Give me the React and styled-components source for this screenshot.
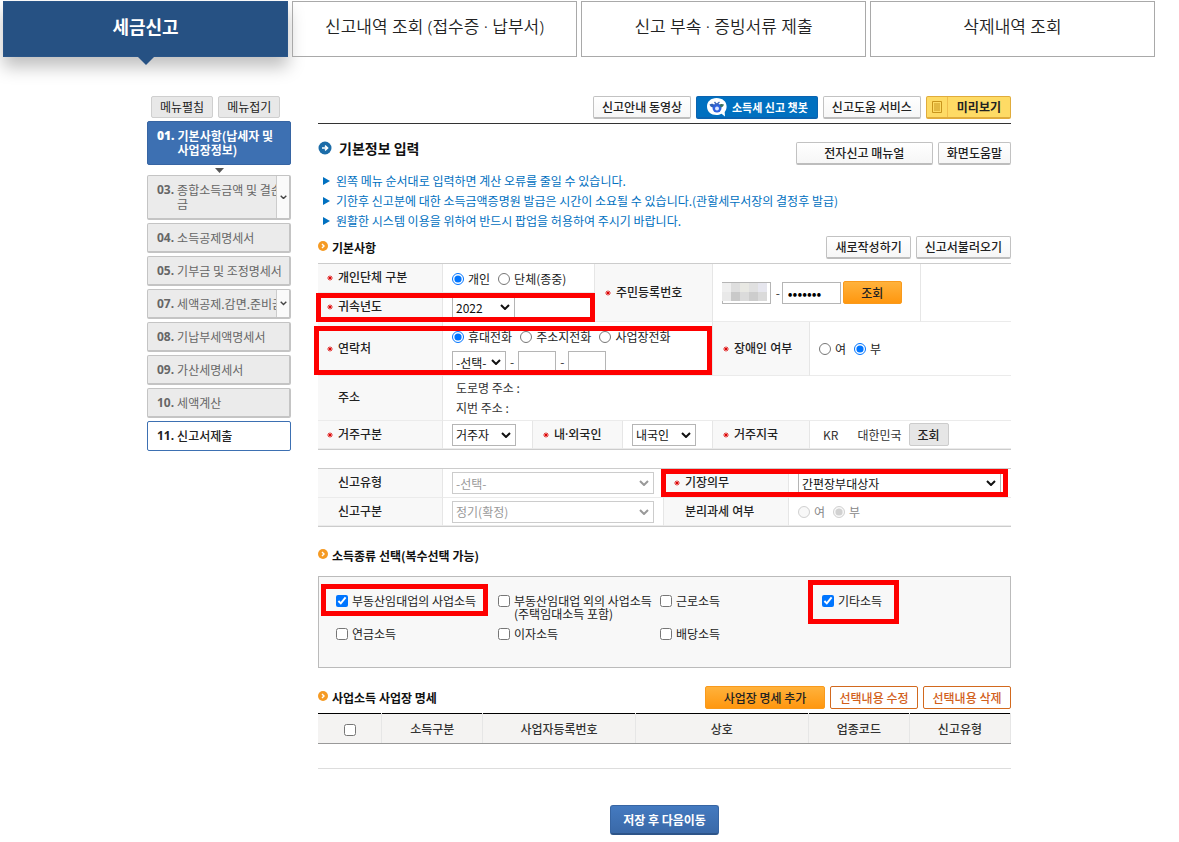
import React, { useState } from "react";

import styled, { createGlobalStyle, css } from "styled-components"

const GlobalStyle = createGlobalStyle`
    * {
        box-sizing: border-box;
    }
    body {
        margin: 0;
        background: #fff;
        color: #333;
        font-family: "Noto Sans CJK KR", "Noto Sans", sans-serif;
        font-size: 12px;
        line-height: 16px;
    }
    button, input, select {
        font-family: inherit;
        font-size: 12px;
    }
    ul, ol, h2, h3 {
        margin: 0;
        padding: 0;
        list-style: none;
    }
    `

const Page = styled.div`
    padding: 1px 24px 8px 3px;
    `

const TabBar = styled.nav`
    display: grid;
    grid-template-columns: repeat(4, 1fr);
    gap: 4px;
    `

const Tab = styled.a`
    position: relative;
    display: flex;
    align-items: center;
    justify-content: center;
    height: 56px;
    padding-bottom: 4px;
    border: 1px solid #a9a9a9;
    color: #222;
    font-family: "Noto Sans", "Noto Sans CJK KR", sans-serif;
    font-size: 17px;
    font-weight: 350;
    text-decoration: none;

    ${(props) => props.$active && css`
        border-color: #2a5588;
        background: #265183;
        color: #fff;
        font-size: 18px;
        font-weight: 700;
        box-shadow: 0 10px 16px rgba(0, 0, 0, 0.25);

        &::after {
            content: "";
            position: absolute;
            top: 100%;
            left: 50%;
            margin-left: -9px;
            border: 9px solid transparent;
            border-top-color: #265183;
            border-bottom: 0;
        }
    `}
    `

const Body = styled.div`
    display: flex;
    align-items: flex-start;
    gap: 27px;
    padding: 39px 144px 0 144px;
    `

const Side = styled.aside`
    flex: none;
    width: 144px;
    `

const SideTools = styled.div`
    display: flex;
    gap: 5px;
    padding: 0 4px 3px;
    `

const SmallButton = styled.button`
    height: 22px;
    padding: 0 8px;
    border: 1px solid #cfcfcf;
    border-radius: 2px;
    background: #e8e8e8;
    color: #222;
    line-height: 18px;
    white-space: nowrap;
    `

const Steps = styled.ol`
    display: flex;
    flex-direction: column;
    gap: 3px;
    `

const Step = styled.li`
    position: relative;
    display: flex;
    min-height: ${(props) => props.$tall ? "45px" : "30px"};
    border: 1px solid #c4c4c4;
    border-right-width: 2px;
    border-bottom-width: 2px;
    border-radius: 2px;
    background: #ebebeb;
    color: #666;
    overflow: hidden;

    ${(props) => props.$state === "on" && css`
        min-height: 44px;
        border: 1px solid #3765a3;
        background: #3d70b2;
        color: #fff;
        font-weight: 700;
    `}
    ${(props) => props.$state === "open" && css`
        border: 1px solid #3d70b2;
        background: #fff;
        color: #222;
        font-weight: 500;
    `}
    `

const StepLink = styled.a`
    flex: 1;
    display: flex;
    gap: 3px;
    min-width: 0;
    padding: 7px 0 5px 9px;
    color: inherit;
    line-height: 14px;
    text-decoration: none;
    white-space: pre;
    overflow: hidden;

    b {
        font-family: "Noto Sans", sans-serif;
    }
    `

const StepToggle = styled.button`
    flex: none;
    display: flex;
    align-items: center;
    justify-content: center;
    width: 13px;
    padding: 0;
    border: 0;
    border-left: 1px solid #ccc;
    background: #fafafa;
    `

const StepArrow = styled.li`
    display: flex;
    justify-content: center;
    height: 4px;
    `

const Main = styled.main`
    flex: 1;
    min-width: 0;
    `

const TopTools = styled.div`
    display: flex;
    justify-content: flex-end;
    gap: 5px;
    padding-bottom: 4px;
    border-bottom: 1px solid #333;
    `

const Button = styled.button`
    display: flex;
    align-items: center;
    justify-content: center;
    height: 23px;
    min-width: ${(props) => props.$wide ? "137px" : "0"};
    padding: 0 8px;
    border: 1px solid #c2c2c2;
    border-bottom: 2px solid #bdbdbd;
    border-radius: 2px;
    background: linear-gradient(#fff, #f6f6f6);
    color: #222;
    font-weight: 500;
    line-height: 18px;
    white-space: nowrap;
    `

const ChatButton = styled(Button)`
    gap: 4px;
    padding: 0 9px;
    border-color: #0b63b0;
    background: #0070c0;
    color: #fff;
    font-size: 11px;
    font-weight: 700;
    `

const PreviewButton = styled(Button)`
    padding: 0 9px 0 0;
    border-color: #e0ac3c;
    background: #fedb65;
    color: #222;
    font-weight: 700;

    span {
        display: flex;
        align-items: center;
        justify-content: center;
        width: 21px;
        height: 100%;
        margin-right: 9px;
        border-right: 1px solid #f0bd4b;
    }
    `

const OrangeButton = styled(Button)`
    min-width: ${(props) => props.$wide ? "120px" : "59px"};
    border: 1px solid #f99a1c;
    background: linear-gradient(#ffb23c, #ff970f);
    `

const OutlineButton = styled(Button)`
    min-width: 88px;
    border: 1px solid #d2691e;
    background: #fff;
    color: #d2601a;
    `

const GrayButton = styled(Button)`
    border: 1px solid #ccc;
    background: #e6e6e6;
    `

const TitleRow = styled.div`
    display: flex;
    align-items: flex-start;
    justify-content: space-between;
    padding-top: 18px;
    `

const PageTitle = styled.h2`
    display: flex;
    align-items: center;
    gap: 7px;
    height: 12px;
    color: #111;
    font-size: 14px;
    font-weight: 700;
    `

const Group = styled.div`
    display: flex;
    gap: 5px;
    `

const Notices = styled.ul`
    padding: 6px 0 0 5px;
    color: #0070c0;
    line-height: 20px;

    li {
        display: flex;
        align-items: center;
        gap: 6px;
    }
    `

const SectionHead = styled.div`
    display: flex;
    align-items: flex-end;
    justify-content: space-between;
    min-height: ${(props) => props.$height};
    padding-bottom: ${(props) => props.$bottom || "4px"};
    `

const SectionTitle = styled.h3`
    display: flex;
    align-items: center;
    gap: 4px;
    padding-bottom: 2px;
    color: #111;
    font-size: 12px;
    font-weight: 700;
    line-height: 18px;

    svg {
        margin-bottom: 4px;
    }
    `

const FormGrid = styled.div`
    display: grid;
    grid-template-columns: ${(props) => props.$columns};
    grid-template-rows: ${(props) => props.$rows};
    margin-bottom: 18px;
    border-top: 1px solid #ccc;
    border-bottom: 1px solid #ccc;
    `

const Cell = styled.div`
    position: relative;
    grid-column: span ${(props) => props.$span || 1};
    grid-row: span ${(props) => props.$rowSpan || 1};
    display: flex;
    align-items: center;
    min-width: 0;
    border-bottom: 1px solid #ebebeb;
    border-left: 1px solid #e6e6e6;
    `

const LabelCell = styled(Cell)`
    padding-left: ${(props) => props.$required ? "10px" : "21px"};
    background: #f8f8f8;
    color: #222;
    font-family: "Noto Sans", "Noto Sans CJK KR", sans-serif;
    font-weight: 500;

    ${(props) => props.$first && css`
        padding-left: ${props.$required ? "9px" : "20px"};
        border-left: 0;
    `}
    `

const ValueCell = styled(Cell)`
    gap: 2px;
    padding-left: 9px;
    `

const Stack = styled.div`
    display: flex;
    flex-direction: column;
    gap: 4px;
    padding-left: 4px;
    `

const PhoneFields = styled.div`
    display: flex;
    flex-direction: column;
    gap: 8px;
    padding-top: 6px;
    `

const Line = styled.div`
    display: flex;
    align-items: center;
    gap: ${(props) => props.$gap || 4}px;
    `

const Star = styled.svg`
    flex: none;
    width: 6px;
    height: 6px;
    margin-right: 5px;
    `

const Choice = styled.label`
    display: flex;
    align-items: flex-start;
    gap: 4px;
    color: ${(props) => props.$muted ? "#888" : "#222"};
    line-height: 13px;
    white-space: nowrap;

    input {
        flex: none;
        width: 12px;
        height: 12px;
        margin: 1px 0 0;
    }
    `

const Select = styled.select`
    appearance: none;
    width: ${(props) => props.$width};
    height: 22px;
    padding: 0 18px 0 3px;
    border: 1px solid #b5b5b5;
    border-radius: 0;
    background: #fff;
    color: #111;
    opacity: 1;

    &:disabled {
        border-color: #ccc;
        color: #999;
    }
    `

const SelectBox = styled.span`
    position: relative;
    display: flex;
    flex: none;

    svg {
        position: absolute;
        top: 8px;
        right: 5px;
        pointer-events: none;
    }
    `

const TextInput = styled.input`
    width: ${(props) => props.$width};
    height: 22px;
    padding: 0 5px;
    border: 1px solid #b5b5b5;
    background: #fff;

    &[type="password"] {
        font-size: 14px;
    }
    `

const Masked = styled.span`
    position: relative;
    display: flex;

    svg {
        position: absolute;
        top: 1px;
        left: 0;
    }
    `

const Mark = styled.span`
    position: absolute;
    z-index: 2;
    inset: ${(props) => props.$inset};
    border: 5px solid #fe0000;
    pointer-events: none;
    `

const Marked = styled.div`
    position: relative;
    `

const IncomeBox = styled.div`
    display: grid;
    grid-template-columns: repeat(3, 162px) 1fr;
    grid-auto-rows: 26px;
    row-gap: 7px;
    min-height: 92px;
    padding: 17px 0 0 17px;
    border: 1px solid #bbb;
    background: #f8f8f8;
    `

const BizTable = styled.table`
    width: 100%;
    border-collapse: collapse;
    border-top: 1px solid #000;
    table-layout: fixed;

    th {
        height: 30px;
        padding: 0;
        border-right: 1px solid #e6e6e6;
        border-bottom: 1px solid #999;
        background: #f4f3f2;
        color: #333;
        font-weight: 500;
    }
    th input {
        width: 12px;
        height: 12px;
        margin: 0;
        vertical-align: middle;
    }
    td {
        height: 25px;
        padding: 0;
        border-bottom: 1px solid #ddd;
    }
    `

const SaveRow = styled.div`
    display: flex;
    justify-content: center;
    padding-top: 36px;
    `

const SaveButton = styled.button`
    height: 30px;
    padding: 0 12px;
    border: 1px solid #3765a3;
    border-bottom: 2px solid #2d5488;
    border-radius: 3px;
    background: linear-gradient(#447ac0, #3a69a8);
    color: #fff;
    font-weight: 700;
    `

const Chevron = ({ color = "#111", size = 10 }) => (
    <svg width={size} height={size * 0.6} viewBox="0 0 10 6" fill="none">
        <path d="M1 1l4 4 4-4" stroke={color} strokeWidth="2" />
    </svg>
)

const RequiredStar = () => (
    <Star viewBox="0 0 6 6">
        <path d="M3 .5v5M.3 3h5.400M1.300 1.300l3.400 3.400M4.700 1.300L1.300 4.700" stroke="#d00" strokeWidth="1" />
    </Star>
)

const SectionIcon = () => (
    <svg width="10" height="10" viewBox="0 0 10 10">
        <circle cx="5" cy="5" r="5" fill="#f59a23" />
        <path d="M4 3l2 2-2 2" fill="none" stroke="#fff" strokeWidth="1.4" />
    </svg>
)

const TitleIcon = () => (
    <svg width="14" height="14" viewBox="0 0 14 14">
        <circle cx="7" cy="7" r="6.5" fill="#1b6ca8" />
        <path d="M4 7h5M7 4.6L9.6 7 7 9.4" fill="none" stroke="#fff" strokeWidth="1.5" />
    </svg>
)

const BotIcon = () => (
    <svg width="22" height="20" viewBox="0 0 22 20">
        <path d="M10.500 1C5 1 1 4.500 1 9.500s4 8.500 9.500 8.500c1.800 0 3.500-.3 5-1.200L19 19.500l-.3-4.500C20 13.500 20.600 11.700 20.600 9.500 20.600 4.500 16.500 1 10.500 1z" fill="#fff" />
        <circle cx="11" cy="11" r="4.500" fill="#2f62e0" />
        <circle cx="11" cy="11.500" r="2" fill="#dbe7ff" />
        <path d="M3.500 7.500c2-1.500 4-.8 5 .5l-2 2.500c-1.500-.5-2.500-1.500-3-3z" fill="#2f5fb5" />
        <path d="M18 7.500c-2-1-4-.5-4.500.5l1.500 2.500c1.500-.5 2.500-1.500 3-3z" fill="#37705f" />
        <path d="M8.500 5l2 2.500L13.500 5" fill="none" stroke="#3f68b8" strokeWidth="1.300" />
    </svg>
)

const DocIcon = () => (
    <svg width="10" height="12" viewBox="0 0 10 12" fill="none" stroke="#c8951d">
        <path d="M.5.5h9v11h-9z" />
        <path d="M2 3h6M2 5h6M2 7h6M2 9h6" />
    </svg>
)

const Bullet = () => (
    <svg width="7" height="8" viewBox="0 0 7 8">
        <path d="M0 0l7 4-7 4z" fill="#0070c0" />
    </svg>
)

const mosaic = [
    ["#efefef", "#dedede", "#e8e8e3", "#e0e0e0", "#e6e6ee"],
    ["#e9e9e9", "#c9c9c9", "#dbdbdb", "#cdcdcd", "#dadada"],
]

const Mosaic = () => (
    <svg width="45" height="18" viewBox="0 0 45 18">
        {mosaic.map((row, y) => row.map((color, x) => (
            <rect key={`${x}-${y}`} x={x * 9} y={y * 9} width="9" height="9" fill={color} />
        )))}
    </svg>
)

const Dropdown = ({ label, options, width, disabled }) => (
    <SelectBox>
        <Select aria-label={label} $width={width} disabled={disabled}>
            {options.map((item) => <option key={item}>{item}</option>)}
        </Select>
        <Chevron color={disabled ? "#999" : "#111"} />
    </SelectBox>
)

const Radios = ({ name, options, value, disabled }) => {
    const [picked, setPicked] = useState(value)

    return (
        <Line $gap={8}>
            {options.map((item) => (
                <Choice key={item} $muted={disabled}>
                    <input type="radio" name={name} disabled={disabled}
                    checked={picked === item}
                    onChange={() => setPicked(item)}/>
                    {item}
                </Choice>
            ))}
        </Line>
    )
}

const Label = ({ children, required, ...rest }) => (
    <LabelCell $required={required} {...rest}>
        {required && <RequiredStar />}
        {children}
    </LabelCell>
)

const tabs = ["세금신고", "신고내역 조회 (접수증 · 납부서)", "신고 부속 · 증빙서류 제출", "삭제내역 조회"]

const steps = [
    { no: "01.", name: "기본사항(납세자 및\n사업장정보)", state: "on" },
    { no: "03.", name: "종합소득금액 및 결손\n금", toggle: true, tall: true },
    { no: "04.", name: "소득공제명세서" },
    { no: "05.", name: "기부금 및 조정명세서" },
    { no: "07.", name: "세액공제.감면.준비금", toggle: true },
    { no: "08.", name: "기납부세액명세서" },
    { no: "09.", name: "가산세명세서" },
    { no: "10.", name: "세액계산" },
    { no: "11.", name: "신고서제출", state: "open" },
]

const notices = [
    "왼쪽 메뉴 순서대로 입력하면 계산 오류를 줄일 수 있습니다.",
    "기한후 신고분에 대한 소득금액증명원 발급은 시간이 소요될 수 있습니다.(관할세무서장의 결정후 발급)",
    "원활한 시스템 이용을 위하여 반드시 팝업을 허용하여 주시기 바랍니다.",
]

const incomes = [
    { name: "부동산임대업의 사업소득", checked: true, mark: "-10px 10px 4px -15px" },
    { name: "부동산임대업 외의 사업소득", note: "(주택임대소득 포함)" },
    { name: "근로소득" },
    { name: "기타소득", checked: true, mark: "-14px 111px -4px -14px" },
    { name: "연금소득" },
    { name: "이자소득" },
    { name: "배당소득" },
]

const columns = [
    { name: "소득구분", width: "14.6%" },
    { name: "사업자등록번호", width: "22%" },
    { name: "상호", width: "25%" },
    { name: "업종코드", width: "14.6%" },
    { name: "신고유형", width: "14.6%" },
]

const Sidebar = () => (
    <Side>
        <SideTools>
            <SmallButton type="button">메뉴펼침</SmallButton>
            <SmallButton type="button">메뉴접기</SmallButton>
        </SideTools>
        <Steps>
            {steps.map((item) => (
                <React.Fragment key={item.no}>
                    <Step $state={item.state} $tall={item.tall}>
                        <StepLink href="#">
                            <b>{item.no}</b>
                            <span>{item.name}</span>
                        </StepLink>
                        {item.toggle && (
                            <StepToggle type="button" aria-label={item.name}>
                                <Chevron color="#444" size={7} />
                            </StepToggle>
                        )}
                    </Step>
                    {item.state === "on" && (
                        <StepArrow>
                            <svg width="9" height="5" viewBox="0 0 9 5"><path d="M0 0h9L4.500 5z" fill="#555" /></svg>
                        </StepArrow>
                    )}
                </React.Fragment>
            ))}
        </Steps>
    </Side>
)

const BasicForm = () => (
    <FormGrid $columns="124px 90px 62px 28px 90px 97px 111px 1fr" $rows="29px 29px 54px 45px 28px">
        <Label $first required>개인단체 구분</Label>
        <ValueCell $span={2}>
            <Radios name="kind" options={["개인", "단체(종중)"]} value="개인" />
        </ValueCell>
        <Label $span={2} $rowSpan={2} required>주민등록번호</Label>
        <ValueCell $span={2} $rowSpan={2}>
            <Masked>
                <TextInput aria-label="주민등록번호 앞자리" $width="49px" />
                <Mosaic />
            </Masked>
            <Line $gap={2}>
                <span>&nbsp;-</span>
                <TextInput type="password" aria-label="주민등록번호 뒷자리" $width="59px" defaultValue="1234567" />
            </Line>
            <OrangeButton type="button">조회</OrangeButton>
        </ValueCell>
        <Cell $rowSpan={2} />

        <Label $first required>
            귀속년도
            <Mark $inset="0 -153px -1px -2px" />
        </Label>
        <ValueCell $span={2}>
            <Dropdown label="귀속년도" options={["2022", "2021"]} width="63px" />
        </ValueCell>

        <Label $first required>
            연락처
            <Mark $inset="4px -270px 0 -4px" />
        </Label>
        <ValueCell $span={4}>
            <PhoneFields>
                <Radios name="phone" options={["휴대전화", "주소지전화", "사업장전화"]} value="휴대전화" />
                <Line>
                    <Dropdown label="전화 앞자리" options={["-선택-", "010"]} width="54px" />
                    <span>-</span>
                    <TextInput aria-label="전화 가운데자리" $width="38px" />
                    <span>-</span>
                    <TextInput aria-label="전화 뒷자리" $width="38px" />
                </Line>
            </PhoneFields>
        </ValueCell>
        <Label required>장애인 여부</Label>
        <ValueCell $span={2}>
            <Radios name="disabled" options={["여", "부"]} value="부" />
        </ValueCell>

        <Label $first>주소</Label>
        <ValueCell $span={7}>
            <Stack>
                <span>도로명 주소 :</span>
                <span>지번 주소 :</span>
            </Stack>
        </ValueCell>

        <Label $first required>거주구분</Label>
        <ValueCell>
            <Dropdown label="거주구분" options={["거주자", "비거주자"]} width="64px" />
        </ValueCell>
        <Label $span={2} required>내·외국인</Label>
        <ValueCell>
            <Dropdown label="내·외국인" options={["내국인", "외국인"]} width="64px" />
        </ValueCell>
        <Label required>거주지국</Label>
        <ValueCell $span={2}>
            <Stack>
                <Line $gap={7}>
                    <span>KR</span>
                    <span>&emsp;대한민국</span>
                    <GrayButton type="button">조회</GrayButton>
                </Line>
            </Stack>
        </ValueCell>
    </FormGrid>
)

const ReportForm = () => (
    <FormGrid $columns="124px 221px 125px 1fr" $rows="29px 28px">
        <Label $first>신고유형</Label>
        <ValueCell>
            <Dropdown label="신고유형" options={["-선택-"]} width="202px" disabled />
        </ValueCell>
        <Label required>기장의무</Label>
        <ValueCell>
            <Dropdown label="기장의무" options={["간편장부대상자", "복식부기의무자"]} width="203px" />
            <Mark $inset="0 3px 0 -128px" />
        </ValueCell>
        <Label $first>신고구분</Label>
        <ValueCell>
            <Dropdown label="신고구분" options={["정기(확정)"]} width="202px" disabled />
        </ValueCell>
        <Label>분리과세 여부</Label>
        <ValueCell>
            <Radios name="separate" options={["여", "부"]} value="부" disabled />
        </ValueCell>
    </FormGrid>
)

const Business = () => (
    <BizTable>
        <colgroup>
            <col />
            {columns.map((item) => <col key={item.name} style={{ width: item.width }} />)}
        </colgroup>
        <thead>
            <tr>
                <th><input type="checkbox" aria-label="전체 선택" /></th>
                {columns.map((item) => <th key={item.name}>{item.name}</th>)}
            </tr>
        </thead>
        <tbody>
            <tr><td colSpan={6}></td></tr>
        </tbody>
    </BizTable>
)

const App = () => {
    return (
        <Page>
            <GlobalStyle />
            <TabBar>
                {tabs.map((item, i) => (
                    <Tab key={item} href="#" $active={i === 0}>{item}</Tab>
                ))}
            </TabBar>
            <Body>
                <Sidebar />
                <Main>
                    <TopTools>
                        <Button type="button">신고안내 동영상</Button>
                        <ChatButton type="button"><BotIcon />소득세 신고 챗봇</ChatButton>
                        <Button type="button">신고도움 서비스</Button>
                        <PreviewButton type="button"><span><DocIcon /></span>미리보기</PreviewButton>
                    </TopTools>
                    <TitleRow>
                        <PageTitle><TitleIcon />기본정보 입력</PageTitle>
                        <Group>
                            <Button type="button" $wide>전자신고 매뉴얼</Button>
                            <Button type="button">화면도움말</Button>
                        </Group>
                    </TitleRow>
                    <Notices>
                        {notices.map((item) => <li key={item}><Bullet />{item}</li>)}
                    </Notices>

                    <SectionHead $height="32px">
                        <SectionTitle><SectionIcon />기본사항</SectionTitle>
                        <Group>
                            <Button type="button">새로작성하기</Button>
                            <Button type="button">신고서불러오기</Button>
                        </Group>
                    </SectionHead>
                    <BasicForm />
                    <ReportForm />

                    <SectionHead $height="31px" $bottom="9px">
                        <SectionTitle><SectionIcon />소득종류 선택(복수선택 가능)</SectionTitle>
                    </SectionHead>
                    <IncomeBox>
                        {incomes.map((item) => (
                            <Marked key={item.name}>
                                <Choice>
                                    <input type="checkbox" defaultChecked={item.checked} />
                                    <span>{item.name}{item.note && <><br />{item.note}</>}</span>
                                </Choice>
                                {item.mark && <Mark $inset={item.mark} />}
                            </Marked>
                        ))}
                    </IncomeBox>

                    <SectionHead $height="45px">
                        <SectionTitle><SectionIcon />사업소득 사업장 명세</SectionTitle>
                        <Group>
                            <OrangeButton type="button" $wide>사업장 명세 추가</OrangeButton>
                            <OutlineButton type="button">선택내용 수정</OutlineButton>
                            <OutlineButton type="button">선택내용 삭제</OutlineButton>
                        </Group>
                    </SectionHead>
                    <Business />
                    <SaveRow>
                        <SaveButton type="button">저장 후 다음이동</SaveButton>
                    </SaveRow>
                </Main>
            </Body>
        </Page>
    )
}

export default App
